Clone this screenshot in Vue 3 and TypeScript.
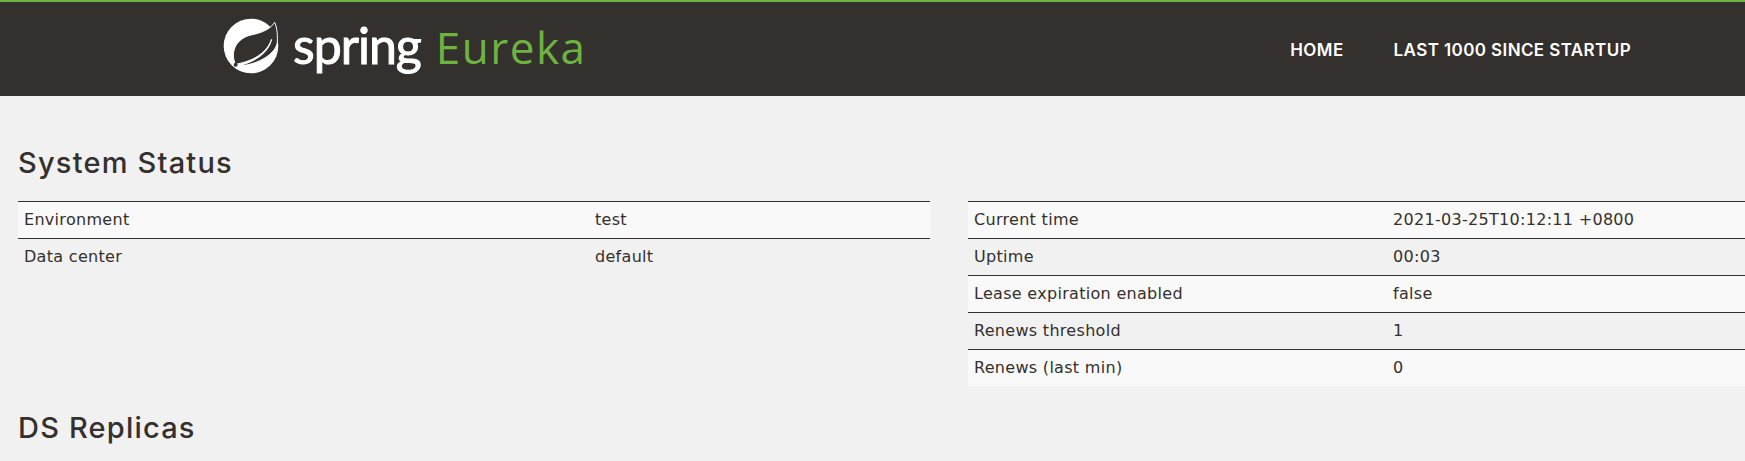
<script setup lang="ts">
interface Row {
  label: string;
  value: string;
}

const generalInfo: Row[] = [
  { label: 'Environment', value: 'test' },
  { label: 'Data center', value: 'default' },
];

const runtimeInfo: Row[] = [
  { label: 'Current time', value: '2021-03-25T10:12:11 +0800' },
  { label: 'Uptime', value: '00:03' },
  { label: 'Lease expiration enabled', value: 'false' },
  { label: 'Renews threshold', value: '1' },
  { label: 'Renews (last min)', value: '0' },
];
</script>

<template>
  <div class="page">
    <header class="navbar">
      <a class="brand" href="#">
        <svg class="leaf" viewBox="0 0 240 210" aria-hidden="true">
          <circle cx="108" cy="108" r="82" fill="#fff" />
          <path
            d="M179 37C166 58 140 68 112 74C80 80 56 102 55 135C55 147 58 155 62 163C100 155 150 140 170 88C160 130 120 155 70 168C130 165 185 130 187 95C188 70 185 50 179 37Z"
            fill="#34302d"
            stroke="#fff"
            stroke-width="3"
          />
          <circle cx="62" cy="164" r="6" fill="#34302d" />
        </svg>
        <span class="brand-spring">spring</span>
        <span class="brand-eureka">Eureka</span>
      </a>
      <nav class="nav">
        <a href="#">HOME</a>
        <a href="#">LAST 1000 SINCE STARTUP</a>
      </nav>
    </header>

    <main class="content">
      <h1>System Status</h1>
      <div class="status">
        <table class="left">
          <tbody>
            <tr v-for="row in generalInfo" :key="row.label">
              <td class="label">{{ row.label }}</td>
              <td>{{ row.value }}</td>
            </tr>
          </tbody>
        </table>
        <table class="right">
          <tbody>
            <tr v-for="row in runtimeInfo" :key="row.label">
              <td class="label">{{ row.label }}</td>
              <td>{{ row.value }}</td>
            </tr>
          </tbody>
        </table>
      </div>
      <h1 class="replicas">DS Replicas</h1>
    </main>
  </div>
</template>

<style>
html,
body {
  margin: 0;
  overflow: hidden;
  background: #f1f1f1;
}
</style>

<style scoped>
.page {
  font-family: 'DejaVu Sans', 'Noto Sans', sans-serif;
  color: #34302d;
  height: 461px;
  overflow: hidden;
}

.navbar {
  display: flex;
  align-items: flex-start;
  height: 94px;
  background: #34302d;
  border-top: 2px solid #6db33f;
  padding-left: 215px;
}

.brand {
  display: flex;
  align-items: baseline;
  text-decoration: none;
  height: 78px;
  margin-top: 8px;
}

.leaf {
  align-self: flex-start;
  width: 80px;
  height: 70px;
  flex-shrink: 0;
}

.brand-spring {
  margin-left: -2px;
  font-family: Lato, sans-serif;
  font-size: 50px;
  line-height: 70px;
  color: #fff;
  letter-spacing: -1px;
  -webkit-text-stroke: 1px #fff;
}

.brand-eureka {
  margin-left: 15px;
  font-family: 'Open Sans', sans-serif;
  font-size: 44px;
  line-height: 70px;
  color: #6db33f;
  letter-spacing: 1.5px;
}

.nav {
  display: flex;
  gap: 50px;
  margin-left: auto;
  padding: 39px 114px 0 0;
  font-family: Inter, sans-serif;
  font-size: 17px;
  font-weight: 600;
  line-height: 18px;
  letter-spacing: 0.4px;
}

.nav a {
  color: #fff;
  text-decoration: none;
}

.content {
  padding: 47px 0 0 18px;
}

h1 {
  margin: 0;
  font-family: Inter, sans-serif;
  font-size: 29px;
  font-weight: 500;
  line-height: 40px;
  letter-spacing: 1.2px;
  color: #34302d;
}

.status {
  display: grid;
  grid-template-columns: 912px 912px;
  column-gap: 38px;
  align-items: start;
  margin-top: 18px;
}

table {
  width: 100%;
  border-collapse: collapse;
  table-layout: fixed;
  font-size: 16px;
  letter-spacing: 0.3px;
}

td {
  height: 35px;
  padding: 0 6px 1px;
  border-top: 1px solid #34302d;
  box-sizing: content-box;
}

tr:nth-child(odd) td {
  background: #f9f9f9;
}

.left .label {
  width: 559px;
}

.right .label {
  width: 407px;
}

.replicas {
  margin-top: 22px;
}
</style>
